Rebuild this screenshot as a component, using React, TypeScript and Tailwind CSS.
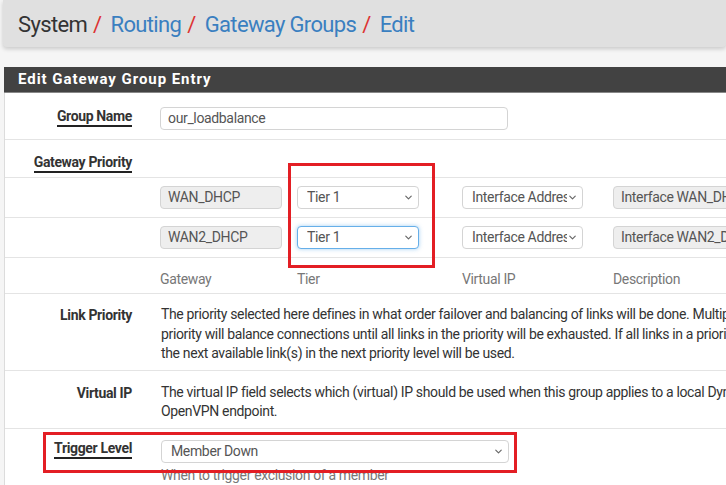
import { ChevronDown } from "lucide-react";

function Label({ children, underline = false }: { children: React.ReactNode; underline?: boolean }) {
  return (
    <div className="w-[127px] shrink-0 text-right font-bold text-[14px] text-[#333]">
      <span className={underline ? "border-b-2 border-[#222] pb-[1px]" : ""}>{children}</span>
    </div>
  );
}

function Select({ value, width, focused = false }: { value: string; width: string; focused?: boolean }) {
  return (
    <div
      className={`${width} h-[23px] shrink-0 flex items-center justify-between rounded-[4px] border bg-white pl-[9px] pr-[4px] text-[14px] text-[#555] ${
        focused ? "border-[#66afe9] shadow-[0_0_4px_rgba(102,175,233,0.6)]" : "border-[#d4d4d4]"
      }`}
    >
      <span className="whitespace-nowrap overflow-hidden">{value}</span>
      <ChevronDown className="w-[11px] h-[11px] shrink-0 text-[#666]" strokeWidth={2.5} />
    </div>
  );
}

function ReadOnly({ value, width }: { value: string; width: string }) {
  return (
    <div className={`${width} h-[23px] shrink-0 flex items-center rounded-[4px] border border-[#d4d4d4] bg-[#eeeeee] pl-[7px] text-[14px] text-[#555] whitespace-nowrap overflow-hidden`}>
      {value}
    </div>
  );
}

const GATEWAYS = [
  { name: "WAN_DHCP", desc: "Interface WAN_DHCP Gateway", focused: false },
  { name: "WAN2_DHCP", desc: "Interface WAN2_DHCP Gateway", focused: true },
];

export default function App() {
  return (
    <div className="relative w-[726px] h-[485px] overflow-hidden bg-[#f5f5f5] font-['Roboto',sans-serif] text-[#333]">
      {/* breadcrumb */}
      <div className="ml-[3px] h-[47px] rounded-b-[4px] bg-[#e0e0e0] shadow-[0_2px_4px_rgba(0,0,0,0.18)] flex items-center pl-[15px] pt-[2px] text-[22px] tracking-[-0.65px]">
        <span className="text-[#333]">System</span>
        <span className="text-[#d33] ml-[6px] mr-[9px]">/</span>
        <span className="text-[#3a7fc0]">Routing</span>
        <span className="text-[#d33] ml-[6px] mr-[9px]">/</span>
        <span className="text-[#3a7fc0]">Gateway Groups</span>
        <span className="text-[#d33] ml-[6px] mr-[9px]">/</span>
        <span className="text-[#3a7fc0]">Edit</span>
      </div>

      {/* panel */}
      <div className="ml-[4px] mt-[20px]">
        <div className="h-[26px] bg-[#424242] border-b border-[#888] flex items-center pl-[14px] text-white font-bold text-[15px] tracking-[0.95px]">
          Edit Gateway Group Entry
        </div>

        <div className="bg-white border-l border-[#dcdcdc] text-[14px] tracking-[-0.35px]">
          {/* group name */}
          <div className="h-[47px] flex items-center gap-[29px] border-b border-[#e4e4e4]">
            <Label underline>Group Name</Label>
            <div className="w-[348px] h-[23px] mt-[4px] -ml-[1px] flex items-center rounded-[4px] border border-[#d4d4d4] pl-[7px] text-[#555]">
              our_loadbalance
            </div>
          </div>

          {/* gateway priority */}
          <div className="h-[38px] flex items-end pb-[4px] border-b border-[#e4e4e4]">
            <Label underline>Gateway Priority</Label>
          </div>

          {GATEWAYS.map((g) => (
            <div key={g.name} className="h-[40px] flex items-center pb-[1px] border-b border-[#e4e4e4] pl-[155px]">
              <ReadOnly value={g.name} width="w-[122px]" />
              <div className="ml-[15px]">
                <Select value="Tier 1" width="w-[122px]" focused={g.focused} />
              </div>
              <div className="ml-[43px]">
                <Select value="Interface Address" width="w-[121px]" />
              </div>
              <div className="ml-[30px]">
                <ReadOnly value={g.desc} width="w-[140px]" />
              </div>
            </div>
          ))}

          {/* column headings */}
          <div className="h-[36px] flex items-center pt-[7px] border-b border-[#e4e4e4] pl-[155px] text-[#777]">
            <span className="w-[137px]">Gateway</span>
            <span className="w-[165px]">Tier</span>
            <span className="w-[151px]">Virtual IP</span>
            <span>Description</span>
          </div>

          {/* link priority */}
          <div className="h-[77px] flex gap-[29px] pt-[11px] border-b border-[#e4e4e4]">
            <Label>Link Priority</Label>
            <p className="leading-[19.5px] whitespace-nowrap">
              The priority selected here defines in what order failover and balancing of links will be done. Multiple links of the same
              <br />
              priority will balance connections until all links in the priority will be exhausted. If all links in a priority level are exhausted,
              <br />
              the next available link(s) in the next priority level will be used.
            </p>
          </div>

          {/* virtual ip */}
          <div className="h-[58px] flex gap-[29px] pt-[12px] border-b border-[#e4e4e4]">
            <Label>Virtual IP</Label>
            <p className="leading-[19px] whitespace-nowrap">
              The virtual IP field selects which (virtual) IP should be used when this group applies to a local Dynamic DNS, IPsec or
              <br />
              OpenVPN endpoint.
            </p>
          </div>

          {/* trigger level */}
          <div className="h-[60px] flex gap-[29px] pt-[11px]">
            <div className="-mt-[2px]">
              <Label underline>Trigger Level</Label>
            </div>
            <div className="flex flex-col">
              <Select value="Member Down" width="w-[348px]" />
              <span className="mt-[2px] text-[#777]">When to trigger exclusion of a member</span>
            </div>
          </div>
        </div>
      </div>

      {/* annotation boxes */}
      <div className="absolute left-[288px] top-[163px] w-[147px] h-[105px] border-[3px] border-[#e31e24]" />
      <div className="absolute left-[43px] top-[432px] w-[474px] h-[41px] border-[3px] border-[#e31e24]" />
    </div>
  );
}
